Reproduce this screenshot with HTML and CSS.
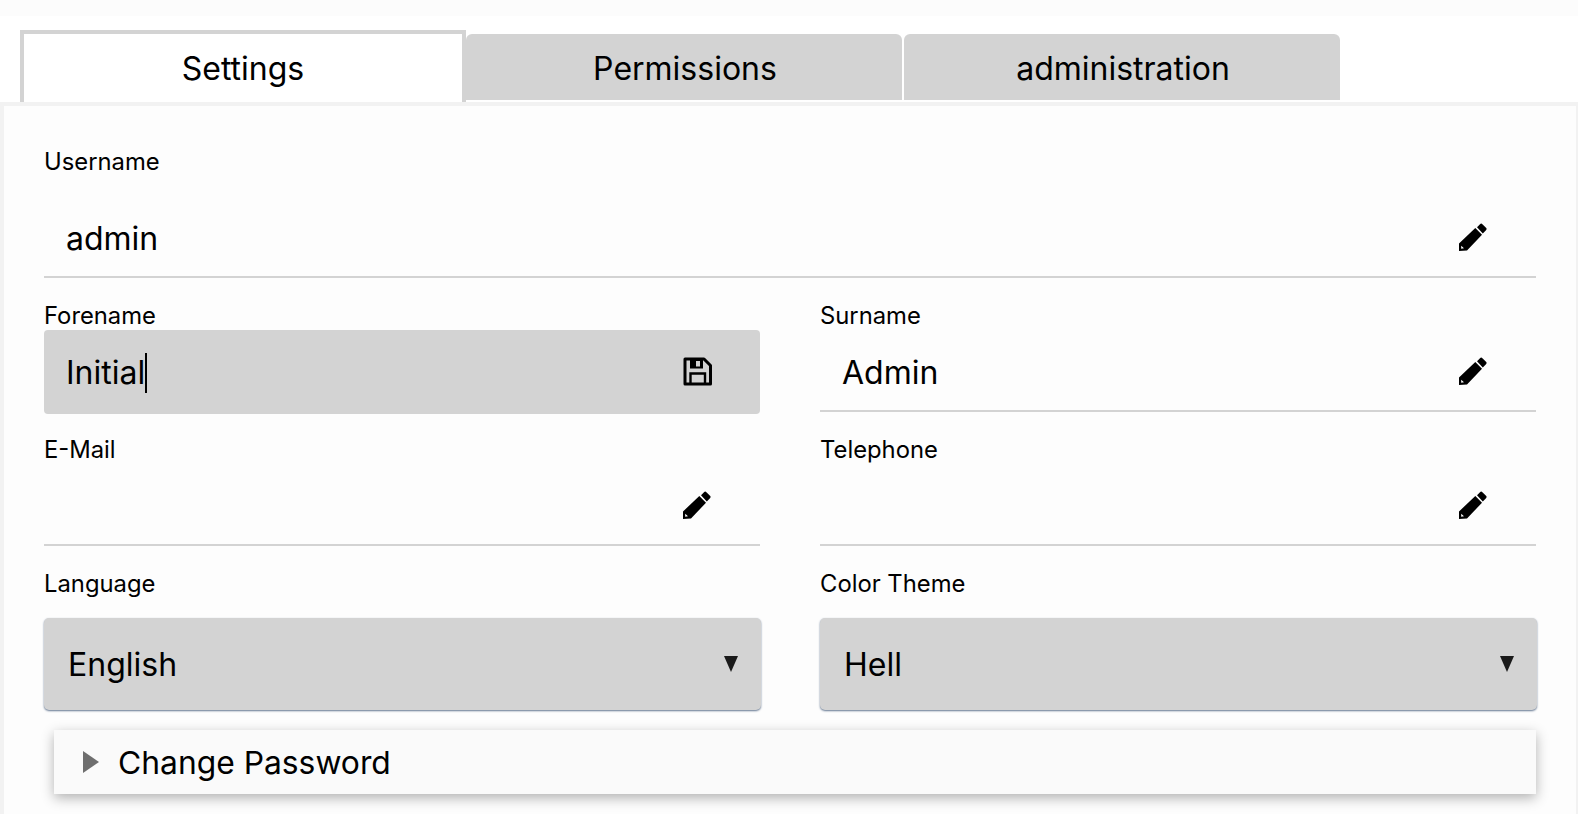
FILE: index.html
```html
<!DOCTYPE html>
<html lang="en">
<head>
<meta charset="utf-8">
<title>Settings</title>
<link rel="stylesheet" href="styles.css">
</head>
<body>
<svg class="defs" width="0" height="0" aria-hidden="true">
  <symbol id="pencil" viewBox="0 0 28 28">
    <path d="M18 4.300 21 1.200Q22.200 0 23.400 1.200L27 4.800Q28.200 6 27 7.200L23.800 10.400Z"/>
    <path fill-rule="evenodd" d="M16.300 5 23 11.700 8 27.500 0 28V20.500ZM2.200 22.800V25.700L5 25.300Z"/>
  </symbol>
  <symbol id="save" viewBox="0 0 29 29">
    <path fill="none" stroke="currentColor" stroke-width="3" stroke-linejoin="round" d="M2 2H21L27.500 8.500V27H2Z"/>
    <path fill="none" stroke="currentColor" stroke-width="2.400" d="M7.500 27V16.500H22V27"/>
    <path fill-rule="evenodd" d="M7 2H20V11.500H7ZM13 4V9.500H17V4Z"/>
  </symbol>
</svg>

<div class="top-strip"></div>

<nav class="tabs">
  <div class="tab tab-active">Settings</div>
  <div class="tab">Permissions</div>
  <div class="tab">administration</div>
</nav>

<main class="panel">
  <div class="field field-first">
    <div class="label label-spaced">Username</div>
    <div class="control"><span class="value">admin</span><svg class="icon"><use href="#pencil"/></svg></div>
  </div>

  <div class="grid">
    <div class="field">
      <div class="label">Forename</div>
      <div class="control control-active"><span class="value">Initial<span class="caret"></span></span><svg class="icon icon-save"><use href="#save"/></svg></div>
    </div>
    <div class="field">
      <div class="label">Surname</div>
      <div class="control"><span class="value">Admin</span><svg class="icon"><use href="#pencil"/></svg></div>
    </div>
    <div class="field">
      <div class="label">E-Mail</div>
      <div class="control"><span class="value"></span><svg class="icon"><use href="#pencil"/></svg></div>
    </div>
    <div class="field">
      <div class="label">Telephone</div>
      <div class="control"><span class="value"></span><svg class="icon"><use href="#pencil"/></svg></div>
    </div>
    <div class="field field-select">
      <div class="label label-spaced">Language</div>
      <div class="select"><span>English</span><i class="arrow"></i></div>
    </div>
    <div class="field field-select">
      <div class="label label-spaced">Color Theme</div>
      <div class="select"><span>Hell</span><i class="arrow"></i></div>
    </div>
  </div>

  <div class="expander"><i class="marker"></i><span>Change Password</span></div>
</main>
</body>
</html>
```

FILE: styles.css
```css
* { box-sizing: border-box; }

html, body {
  margin: 0;
  height: 814px;
  overflow: hidden;
  background: #fff;
  color: #000;
  font-family: Inter, Roboto, sans-serif;
}

.defs { position: absolute; }

.top-strip {
  height: 16px;
  background: #fcfcfc;
}

.tabs {
  display: flex;
  align-items: flex-start;
  height: 72px;
  margin-top: 14px;
  padding-left: 20px;
}

.tab {
  width: 436px;
  height: 66px;
  margin-top: 4px;
  margin-right: 2px;
  display: flex;
  align-items: center;
  justify-content: center;
  padding: 2px 0 0 2px;
  background: #d3d3d3;
  border-radius: 6px 6px 0 0;
  font-size: 32px;
}

.tab-active {
  width: 446px;
  height: 72px;
  margin-top: 0;
  margin-right: 0;
  padding: 0;
  background: #fff;
  border: 4px solid #d3d3d3;
  border-bottom: 0;
  border-radius: 0;
}

.panel {
  height: 712px;
  padding: 44px 40px 0 40px;
  background: #fdfdfd;
  border-style: solid;
  border-color: #f2f2f2;
  border-width: 4px 2px 0 4px;
}

.grid {
  display: grid;
  grid-template-columns: 716px 716px;
  column-gap: 60px;
}

.field { height: 134px; }
.field-first { height: 154px; }
.field-select { height: 158px; }

.label {
  height: 26px;
  line-height: 24px;
  font-size: 23.8px;
}

.label-spaced { margin-bottom: 20px; }

.control {
  height: 82px;
  display: flex;
  align-items: center;
  justify-content: space-between;
  padding: 2px 49px 0 22px;
  border-bottom: 2px solid #d3d3d3;
}

.control-active {
  height: 84px;
  padding-top: 0;
  padding-bottom: 1px;
  border-bottom: 0;
  border-radius: 4px;
  background: #d3d3d3;
}

.value {
  display: flex;
  align-items: center;
  margin-top: 2px;
  font-size: 32px;
}

.caret {
  width: 2px;
  height: 40px;
  background: #000;
}

.icon {
  width: 28px;
  height: 28px;
  flex: none;
  fill: #000;
}

.icon-save {
  width: 29px;
  height: 29px;
  margin-right: -1px;
}

.select {
  width: 717px;
  height: 92px;
  display: flex;
  align-items: center;
  justify-content: space-between;
  padding: 0 23px 0 24px;
  background: #d3d3d3;
  border-radius: 5px;
  box-shadow: 0 1px 2px rgba(50, 75, 110, 0.75);
  font-size: 32px;
}

.arrow {
  width: 0;
  height: 0;
  border-left: 7px solid transparent;
  border-right: 7px solid transparent;
  border-top: 16px solid #1a1a1a;
}

.expander {
  height: 64px;
  margin-left: 10px;
  display: flex;
  align-items: center;
  padding-left: 29px;
  background: #fafafa;
  box-shadow: 0 4px 12px rgba(0, 0, 0, 0.3);
  font-size: 31.8px;
}

.marker {
  width: 0;
  height: 0;
  margin-right: 19px;
  border-top: 11px solid transparent;
  border-bottom: 11px solid transparent;
  border-left: 16px solid #6e6e6e;
}
```
